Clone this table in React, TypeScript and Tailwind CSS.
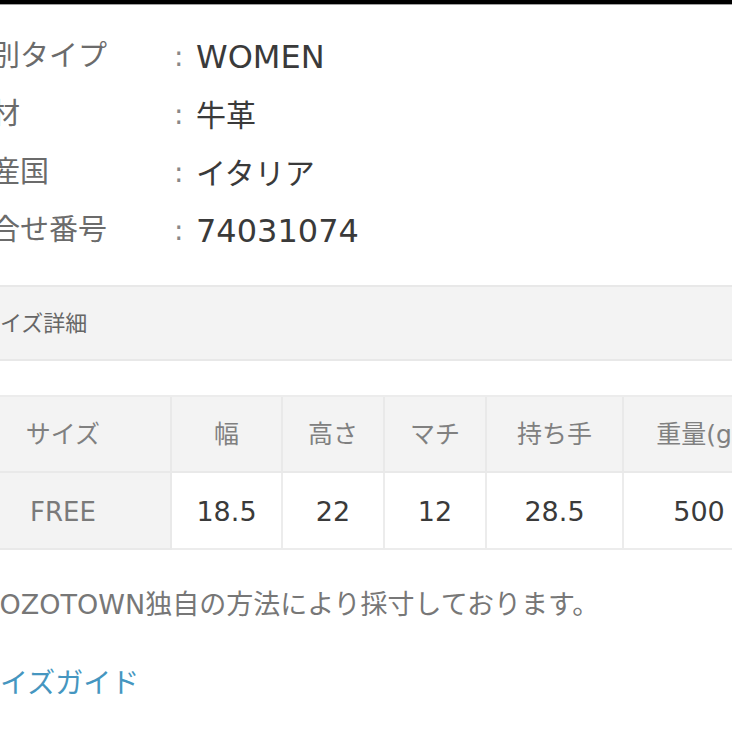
const font = { fontFamily: '"DejaVu Sans", "Noto Sans CJK JP", sans-serif' };

const specs = [
  { label: "性別タイプ", value: "WOMEN", size: "text-[32px]" },
  { label: "素材", value: "牛革", size: "text-[30px]" },
  { label: "原産国", value: "イタリア", size: "text-[30px]" },
  { label: "問合せ番号", value: "74031074", size: "text-[32px]" },
];

const headers = ["サイズ", "幅", "高さ", "マチ", "持ち手", "重量(g)"];
const values = ["FREE", "18.5", "22", "12", "28.5", "500"];

export default function App() {
  return (
    <div className="relative h-[732px] w-[732px] overflow-hidden bg-white" style={font}>
      <div className="h-[4px] bg-black" />
      <div className="h-px bg-[#a0a0a0]" />

      {/* spec list */}
      <div className="pt-[21px]">
        {specs.map((s) => (
          <div key={s.label} className="flex h-[58px] items-center whitespace-nowrap pt-[4px]">
            <span className="ml-[-38px] w-[212px] shrink-0 text-[29px] text-[#6b6b6b]">{s.label}</span>
            <span className="w-[22px] shrink-0 text-[28px] text-[#888]">:</span>
            <span className={`${s.size} text-[#3a3a3a]`}>{s.value}</span>
          </div>
        ))}
      </div>

      {/* section header */}
      <div className="mt-[27px] flex h-[76px] items-center border-y-2 border-[#e8e8e8] bg-[#f3f3f3]">
        <span className="ml-[-22px] whitespace-nowrap text-[22px] text-[#666]">サイズ詳細</span>
      </div>

      {/* size table */}
      <div className="ml-[-44px] mt-[34px] w-[820px] border-t-2 border-[#ececec]">
        <div className="grid grid-cols-[216px_111px_102px_102px_137px_152px]">
          {headers.map((h) => (
            <div
              key={h}
              className="flex h-[76px] items-center justify-center whitespace-nowrap border-b-2 border-r-2 border-[#e9e9e9] bg-[#f3f3f3] pt-[2px] text-[25px] text-[#808080]"
            >
              {h}
            </div>
          ))}
          {values.map((v, i) => (
            <div
              key={i}
              className={
                i === 0
                  ? "flex h-[77px] items-center justify-center border-b-2 border-r-2 border-[#e9e9e9] bg-[#f3f3f3] pt-[4px] text-[26px] text-[#7a7a7a]"
                  : "flex h-[77px] items-center justify-center border-b-2 border-r-2 border-[#ececec] bg-white pt-[4px] text-[27px] text-[#3a3a3a]"
              }
            >
              {v}
            </div>
          ))}
        </div>
      </div>

      {/* note */}
      <p className="ml-[-19px] mt-[35px] whitespace-nowrap text-[27px] leading-[40px] text-[#777]">
        ZOZOTOWN独自の方法により採寸しております。
      </p>

      <p className="ml-[-28px] mt-[39px] whitespace-nowrap text-[28px] leading-[40px] text-[#4596c0]">
        サイズガイド
      </p>
    </div>
  );
}
